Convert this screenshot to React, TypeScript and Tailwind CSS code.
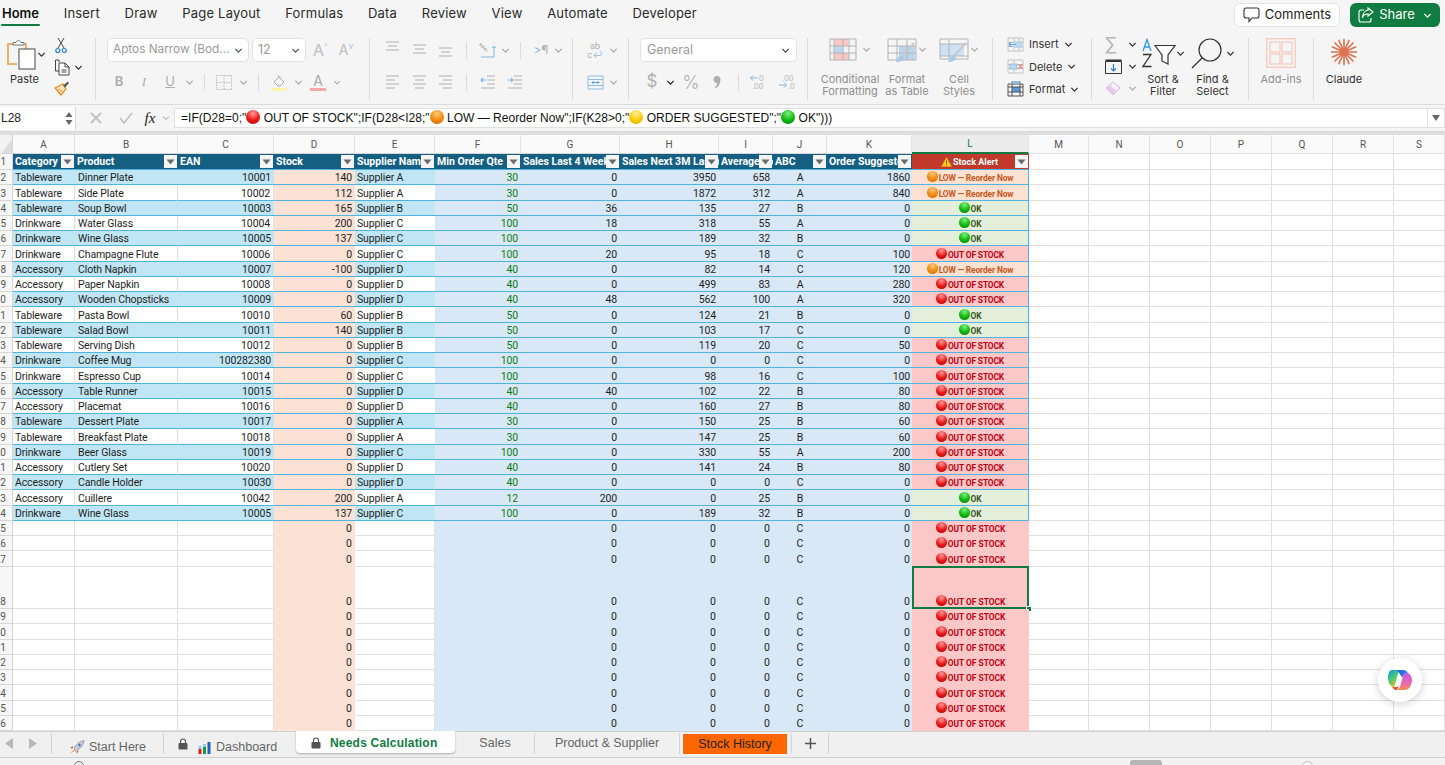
import React from "react";

const W = ["w-[62px]","w-[103px]","w-[96px]","w-[81px]","w-[80px]","w-[86px]","w-[99px]","w-[99px]","w-[54px]","w-[54px]","w-[85px]","w-[117px]"];
const EXTRA = ["w-[60px]","w-[61px]","w-[61px]","w-[61px]","w-[61px]","w-[61px]","w-[51px]"];
const LETTERS = "ABCDEFGHIJKL".split("");
const EXTRAL = ["M","N","O","P","Q","R","S"];
const HEAD = ["Category","Product","EAN","Stock","Supplier Name","Min Order Qte","Sales Last 4 Weeks","Sales Next 3M Last Year","Average Monthly","ABC","Order Suggested"];

type A = "L" | "K" | "O";
type R = [string,string,string,string,string,string,string,string,string,string,string,A];
const DATA: R[] = [
["Tableware","Dinner Plate","10001","140","Supplier A","30","0","3950","658","A","1860","L"],
["Tableware","Side Plate","10002","112","Supplier A","30","0","1872","312","A","840","L"],
["Tableware","Soup Bowl","10003","165","Supplier B","50","36","135","27","B","0","K"],
["Drinkware","Water Glass","10004","200","Supplier C","100","18","318","55","A","0","K"],
["Drinkware","Wine Glass","10005","137","Supplier C","100","0","189","32","B","0","K"],
["Drinkware","Champagne Flute","10006","0","Supplier C","100","20","95","18","C","100","O"],
["Accessory","Cloth Napkin","10007","-100","Supplier D","40","0","82","14","C","120","L"],
["Accessory","Paper Napkin","10008","0","Supplier D","40","0","499","83","A","280","O"],
["Accessory","Wooden Chopsticks","10009","0","Supplier D","40","48","562","100","A","320","O"],
["Tableware","Pasta Bowl","10010","60","Supplier B","50","0","124","21","B","0","K"],
["Tableware","Salad Bowl","10011","140","Supplier B","50","0","103","17","C","0","K"],
["Tableware","Serving Dish","10012","0","Supplier B","50","0","119","20","C","50","O"],
["Drinkware","Coffee Mug","100282380","0","Supplier C","100","0","0","0","C","0","O"],
["Drinkware","Espresso Cup","10014","0","Supplier C","100","0","98","16","C","100","O"],
["Accessory","Table Runner","10015","0","Supplier D","40","40","102","22","B","80","O"],
["Accessory","Placemat","10016","0","Supplier D","40","0","160","27","B","80","O"],
["Tableware","Dessert Plate","10017","0","Supplier A","30","0","150","25","B","60","O"],
["Tableware","Breakfast Plate","10018","0","Supplier A","30","0","147","25","B","60","O"],
["Drinkware","Beer Glass","10019","0","Supplier C","100","0","330","55","A","200","O"],
["Accessory","Cutlery Set","10020","0","Supplier D","40","0","141","24","B","80","O"],
["Accessory","Candle Holder","10030","0","Supplier D","40","0","0","0","C","0","O"],
["Accessory","Cuillere","10042","200","Supplier A","12","200","0","25","B","0","K"],
["Drinkware","Wine Glass","10005","137","Supplier C","100","0","189","32","B","0","K"],
];

const BALL = {
  red: "bg-[radial-gradient(circle_at_50%_25%,#ff9a9a,#e81515_55%,#a80808)]",
  orange: "bg-[radial-gradient(circle_at_50%_25%,#ffc77a,#f08a10_55%,#c46a05)]",
  yellow: "bg-[radial-gradient(circle_at_50%_25%,#fff0a0,#ffcc00_55%,#e0a800)]",
  green: "bg-[radial-gradient(circle_at_50%_25%,#7cf07c,#0fb80f_55%,#067a06)]",
};
function Ball({ c, big }: { c: keyof typeof BALL; big?: boolean }) {
  return <span className={`inline-block rounded-full shrink-0 ${big ? "w-[14px] h-[14px] -translate-y-[1px]" : "w-[11px] h-[11px] -translate-y-[2px]"} ${BALL[c]}`} />;
}

function Chev({ c = "#555", s = 9 }: { c?: string; s?: number }) {
  return <svg width={s} height={s} viewBox="0 0 10 10" fill="none"><path d="M1.5 3.2 5 6.8l3.5-3.6" stroke={c} strokeWidth="1.4" /></svg>;
}
function Sep({ h = "h-[17px]" }: { h?: string }) {
  return <span className={`block w-px bg-[#dcdcdc] ${h}`} />;
}

function Alert({ a }: { a: A }) {
  const base = "flex items-end justify-center gap-[1px] h-full font-bold text-[8.4px] leading-[11px] whitespace-nowrap";
  if (a === "L") return <div className={`${base} text-[#c8581a]`}><Ball c="orange" /><span>LOW — Reorder Now</span></div>;
  if (a === "K") return <div className={`${base} text-[#375623]`}><Ball c="green" /><span>OK</span></div>;
  return <div className={`${base} text-[#c00010]`}><Ball c="red" /><span>OUT OF STOCK</span></div>;
}

function FilterBtn() {
  return (
    <span className="absolute right-[1px] top-[1px] w-[13px] h-[13px] bg-[#f4f4f4] flex items-center justify-center">
      <svg width="9" height="6" viewBox="0 0 9 6"><path d="M0.5 0.5h8L4.5 5.5z" fill="#6b6b6b" /></svg>
    </span>
  );
}

const RH = "w-[13px] shrink-0 bg-[#f7f7f7] border-r border-b border-[#d6d6d6] text-[#555] text-[10px] leading-[12px] tracking-normal flex justify-end pr-[6px] overflow-hidden";

function Extras({ h = "h-full" }: { h?: string }) {
  return <>{EXTRA.map((w, i) => <div key={i} className={`${w} ${h} shrink-0 border-r border-b border-[#e0e0e0] bg-white`} />)}</>;
}

function DataRow({ r, n }: { r: R; n: number }) {
  const band = n % 2 === 0;
  const bg = band ? "bg-[#c0e6f5]" : "bg-white";
  const vline = band ? "" : "border-r border-r-[#e0e0e0]";
  const altBg = r[11] === "L" ? "bg-[#fde1d3]" : r[11] === "K" ? "bg-[#e3efda]" : "bg-[#ffc8c8]";
  const base = "shrink-0 h-full border-b border-b-[#4fb4e2] flex items-end overflow-hidden whitespace-nowrap";
  return (
    <div className="flex h-[15.25px] text-[10.5px] leading-[12px] tracking-[-0.12px] text-[#1f1f1f]">
      <div className={`${RH} items-end`}>{n}</div>
      <div className={`${W[0]} ${base} ${bg} ${vline} pl-[2px]`}>{r[0]}</div>
      <div className={`${W[1]} ${base} ${bg} ${vline} pl-[3px]`}>{r[1]}</div>
      <div className={`${W[2]} ${base} ${bg} ${vline} justify-end pr-[3px]`}>{r[2]}</div>
      <div className={`${W[3]} ${base} bg-[#fce1d5] justify-end pr-[3px]`}>{r[3]}</div>
      <div className={`${W[4]} ${base} ${bg} pl-[2px]`}>{r[4]}</div>
      <div className={`${W[5]} ${base} bg-[#d9e8f7] justify-end pr-[3px] text-[#107c10]`}>{r[5]}</div>
      <div className={`${W[6]} ${base} bg-[#d9e8f7] justify-end pr-[3px]`}>{r[6]}</div>
      <div className={`${W[7]} ${base} bg-[#d9e8f7] justify-end pr-[3px]`}>{r[7]}</div>
      <div className={`${W[8]} ${base} bg-[#d9e8f7] justify-end pr-[3px]`}>{r[8]}</div>
      <div className={`${W[9]} ${base} bg-[#d9e8f7] justify-center`}>{r[9]}</div>
      <div className={`${W[10]} ${base} bg-[#d9e8f7] justify-end pr-[2px]`}>{r[10]}</div>
      <div className={`${W[11]} shrink-0 h-full border-b border-b-[#4fb4e2] border-r border-r-[#4fb4e2] ${altBg}`}><Alert a={r[11]} /></div>
      <Extras />
    </div>
  );
}

function EmptyRow({ n, tall, }: { n: number; tall?: boolean }) {
  const h = tall ? "h-[42.5px]" : "h-[15.25px]";
  const g = "shrink-0 h-full bg-white border-r border-b border-[#e0e0e0]";
  const blue = "shrink-0 h-full bg-[#d9e8f7] flex items-end justify-end pb-[1px] pr-[3px]";
  return (
    <div className={`flex ${h} text-[10.5px] leading-[12px] text-[#1f1f1f]`}>
      <div className={`${RH} items-end`}>{n}</div>
      <div className={`${W[0]} ${g}`} />
      <div className={`${W[1]} ${g}`} />
      <div className={`${W[2]} ${g}`} />
      <div className={`${W[3]} shrink-0 h-full bg-[#fce1d5] flex items-end justify-end pr-[3px] pb-[1px]`}>0</div>
      <div className={`${W[4]} ${g}`} />
      <div className={`${W[5]} shrink-0 h-full bg-[#d9e8f7]`} />
      <div className={`${W[6]} ${blue}`}>0</div>
      <div className={`${W[7]} ${blue}`}>0</div>
      <div className={`${W[8]} ${blue}`}>0</div>
      <div className={`${W[9]} ${blue} !justify-center !pr-0`}>C</div>
      <div className={`${W[10]} ${blue} !pr-[2px]`}>0</div>
      <div className={`${W[11]} shrink-0 h-full bg-[#ffc8c8] relative pb-[1px]`}>
        <Alert a="O" />
        {tall && (
          <>
            <span className="absolute -top-[1px] left-0 right-0 bottom-0 border-2 border-[#107c41]" />
            <span className="absolute -right-[3px] -bottom-[3px] w-[6px] h-[6px] bg-[#107c41] border border-white" />
          </>
        )}
      </div>
      <Extras />
    </div>
  );
}

/* ---------- ribbon icons ---------- */
const PasteIcon = () => (
  <svg width="31" height="32" viewBox="0 0 31 32" fill="none">
    <path d="M2 6h6M18 6h2v5" stroke="#e9b363" strokeWidth="2" />
    <path d="M2 5v21h9" stroke="#e9b363" strokeWidth="2" />
    <path d="M7 7V4.5h3C10.5 2 14.500 2 15 4.500h3V7z" fill="#fff" stroke="#777" strokeWidth="1" />
    <rect x="13" y="11" width="16" height="20" fill="#fff" stroke="#666" strokeWidth="1.2" />
  </svg>
);
const Scissors = () => (
  <svg width="12" height="17" viewBox="0 0 12 17" fill="none">
    <path d="M3 11 9 1M9 11 3 1" stroke="#444" strokeWidth="1" />
    <circle cx="2.800" cy="13.500" r="2" stroke="#2b7cd3" strokeWidth="1.200" />
    <circle cx="9.200" cy="13.500" r="2" stroke="#2b7cd3" strokeWidth="1.200" />
  </svg>
);
const CopyIcon = () => (
  <svg width="17" height="17" viewBox="0 0 17 17" fill="none" stroke="#444">
    <path d="M5 3V1H1.500v11H5" />
    <path d="M5 4h6l4 4v8H5z" fill="#fff" />
    <path d="M11 4v4h4M7.500 11h5M7.500 13h5" />
  </svg>
);
const BrushIcon = () => (
  <svg width="16" height="15" viewBox="0 0 16 15" fill="none">
    <path d="M1 7 9 3l3 5-5 6z" fill="#fde2bd" stroke="#ec8a2a" strokeWidth="1.200" />
    <path d="M3 10l3-2M5 12l3-3" stroke="#ec8a2a" />
    <path d="M9 4.500 14 0.500l1 1.500-4 4.500z" fill="#555" />
  </svg>
);
const AlignTop = ({ y }: { y: number }) => (
  <svg width="15" height="18" viewBox="0 0 15 18" stroke="#b0b0b0" strokeWidth="1.200"><path d={`M1 ${y}h13M3 ${y + 4}h9M1 ${y + 8}h13`} /></svg>
);
const AlignH = ({ k }: { k: "l" | "c" | "r" }) => {
  const d = k === "l" ? "M1 2h13M1 6h9M1 10h13M1 14h9" : k === "c" ? "M1 2h13M3 6h9M1 10h13M3 14h9" : "M1 2h13M5 6h9M1 10h13M5 14h9";
  return <svg width="15" height="16" viewBox="0 0 15 16" stroke="#b0b0b0" strokeWidth="1.200"><path d={d} /></svg>;
};
const Indent = ({ out }: { out?: boolean }) => (
  <svg width="15" height="14" viewBox="0 0 15 14" fill="none" strokeWidth="1.100">
    <path d="M7 1h8M7 5h8M7 9h8M1 13h14" stroke="#b0b0b0" />
    <path d={out ? "M6 5H1M3 3 1 5l2 2" : "M0.500 5H6M4 3l2 2-2 2"} stroke="#7fb7e8" />
  </svg>
);
const ArrowsDec = ({ right }: { right?: boolean }) => (
  <svg width="17" height="16" viewBox="0 0 17 16" fill="none">
    {right ? (
      <>
        <text x="4" y="6.500" fontSize="7.500" fill="#b5b5b5" fontFamily="Inter">.00</text>
        <path d="M1 11h7M6 8.500 8.500 11 6 13.500" stroke="#7fb7e8" />
        <text x="10" y="14.500" fontSize="7.500" fill="#b5b5b5" fontFamily="Inter">.0</text>
      </>
    ) : (
      <>
        <path d="M1.500 4h7M4 1.500 1.500 4 4 6.500" stroke="#7fb7e8" />
        <text x="10" y="7" fontSize="7.500" fill="#b5b5b5" fontFamily="Inter">0</text>
        <text x="3" y="15" fontSize="7.500" fill="#b5b5b5" fontFamily="Inter">.00</text>
      </>
    )}
  </svg>
);
const CondIcon = () => (
  <svg width="28" height="23" viewBox="0 0 28 23" fill="none">
    <path d="M5 1h14v7H5z" fill="#f9c6c6" />
    <path d="M9 8h9v7H9z" fill="#f3f3f3" /><path d="M5 8h9v7H5z" fill="#bcd9f2" />
    <path d="M5 15h15v7H5z" fill="#f9c6c6" />
    <path d="M1 1h26v21H1zM1 8h26M1 15h26M5 1v21M14 1v21M20 1v21" stroke="#b4b4b4" />
  </svg>
);
const TableIcon = ({ cell }: { cell?: boolean }) => (
  <svg width="30" height="26" viewBox="0 0 30 26" fill="none">
    {cell ? <path d="M1 6h24v12H1z" fill="#cfe1f5" /> : <path d="M12 8h16v14H12z" fill="#bcd5ef" />}
    <path d={cell ? "M1 1h28v20H1zM1 6h28M1 18h28M10 1v20" : "M1 1h28v21H1zM1 8h28M1 15h28M10 1v21M20 1v21"} stroke="#b4b4b4" />
    <path d="M27 5 15 18" stroke="#c9c9c9" strokeWidth="2" />
    <path d="M15 17c-3 0-4 3-6 7 4 0 8-1 8-5z" fill="#a9cbec" />
  </svg>
);
const InsertIcon = () => (
  <svg width="17" height="15" viewBox="0 0 17 15" fill="none">
    <path d="M1 1h15v13H1zM1 5.500h15M1 9.500h15M7 1v13M12 1v13" stroke="#c4c4c4" />
    <path d="M7 4h8v7H7z" fill="#bcd9f2" />
    <path d="M9 7.500H2M4.500 5 2 7.500 4.500 10" stroke="#6ba8e0" strokeWidth="1.200" />
  </svg>
);
const DeleteIcon = () => (
  <svg width="17" height="15" viewBox="0 0 17 15" fill="none">
    <path d="M1 1h15v13H1zM1 5.500h15M1 9.500h15M7 1v13" stroke="#c4c4c4" />
    <path d="M3 5h7v5H3z" fill="#bcd9f2" stroke="#8fbce6" />
    <path d="m11.500 5 4 5M15.500 5l-4 5" stroke="#e97b7b" strokeWidth="1.200" />
  </svg>
);
const FormatIcon = () => (
  <svg width="17" height="16" viewBox="0 0 17 16" fill="none">
    <path d="M5 6h8v5H5z" fill="#5b9bdc" />
    <path d="M1 3h15v12H1zM1 6h15M1 11h15M5 3v12M13 3v12" stroke="#444" strokeWidth=".9" />
    <path d="M5 1h8M5 .2v2M13 .2v2" stroke="#2b7cd3" strokeWidth=".9" />
  </svg>
);
const SortIcon = () => (
  <svg width="34" height="30" viewBox="0 0 34 30" fill="none">
    <path d="M1 13 5 1.500 9 13M2.500 9h5" stroke="#2e9be0" strokeWidth="1.300" />
    <path d="M1 16.500h8L1 28.500h8.500" stroke="#333" strokeWidth="1.300" />
    <path d="M13 7.500h20L26 17v9l-6-3v-6z" stroke="#333" strokeWidth="1.200" fill="#fff" />
  </svg>
);
const MagnifierIcon = () => (
  <svg width="31" height="31" viewBox="0 0 31 31" fill="none" stroke="#333" strokeWidth="1.200">
    <circle cx="19" cy="12" r="11" />
    <path d="M11 20 1 30" />
  </svg>
);
const AddInsIcon = () => (
  <svg width="30" height="30" viewBox="0 0 30 30" fill="none">
    <rect x=".7" y=".7" width="28.600" height="28.600" stroke="#f6cdbf" strokeWidth="1.400" />
    <rect x="4" y="4" width="10" height="10" stroke="#f3bfae" /><rect x="16" y="4" width="10" height="10" stroke="#f3bfae" />
    <rect x="4" y="16" width="10" height="10" stroke="#f3bfae" /><rect x="16" y="16" width="10" height="10" stroke="#f3bfae" />
  </svg>
);
const ClaudeIcon = () => (
  <svg width="28" height="28" viewBox="0 0 28 28" stroke="#dd7350" strokeWidth="1.700" strokeLinecap="round">
    <path d="M14 1.500v25M1.500 14h25M5 5l18 18M23 5 5 23M9 2.500l10 23M19 2.500 9 25.500M2.500 9l23 10M25.500 9l-23 10" />
  </svg>
);
const Lock = ({ c = "#555" }: { c?: string }) => (
  <svg width="10" height="12" viewBox="0 0 10 12"><path d="M2.500 5V3.500a2.500 2.500 0 0 1 5 0V5" fill="none" stroke={c} strokeWidth="1.200" /><rect x="0.500" y="5" width="9" height="6.500" rx="1" fill={c} /></svg>
);

const grayLabel = "text-[11px] leading-[12px] text-[#8f8f8f] text-center whitespace-nowrap";
const darkLabel = "text-[11px] leading-[12px] text-[#333] text-center whitespace-nowrap";
const inputBox = "h-[24px] bg-white rounded-[5px] border border-[#e2e2e2] flex items-center text-[12.5px] text-[#9a9a9a] whitespace-nowrap";
const slot = "flex items-center justify-center shrink-0";
const TABS = ["Insert","Draw","Page Layout","Formulas","Data","Review","View","Automate","Developer"];

export default function App() {
  return (
    <div className="w-[1445px] h-[765px] overflow-hidden relative bg-[#f5f5f5] flex flex-col font-['Inter','Liberation_Sans',sans-serif]">
      {/* Tabs */}
      <div className="h-[28px] shrink-0 flex items-start justify-between pr-[5px]">
        <div className="flex gap-[24.7px] pl-[2px] text-[13px] text-[#2a2a2a] leading-[27px] tracking-[0.2px]">
          <div className="relative font-semibold text-[#111] tracking-normal">Home<span className="absolute -left-[1px] -right-[1px] top-[24px] h-[2px] bg-[#107c41] rounded" /></div>
          {TABS.map(t => <div key={t}>{t}</div>)}
        </div>
        <div className="flex items-center gap-[10px] pt-[3px]">
          <div className="w-[106px] h-[24px] bg-white rounded-[6px] border border-[#e3e3e3] flex items-center justify-center gap-[5px] text-[13px] text-[#222]">
            <svg width="17" height="16" viewBox="0 0 17 16" fill="none" stroke="#333" strokeWidth="1.100"><path d="M3 1h11a2 2 0 0 1 2 2v6a2 2 0 0 1-2 2H9l-3 3.500V11H3a2 2 0 0 1-2-2V3a2 2 0 0 1 2-2z" /></svg>
            Comments
          </div>
          <div className="w-[90px] h-[24px] bg-[#107c41] rounded-[6px] flex items-center justify-center gap-[5px] text-[13px] text-white">
            <svg width="16" height="16" viewBox="0 0 16 16" fill="none" stroke="#fff" strokeWidth="1.100"><path d="M6 3H3a2 2 0 0 0-2 2v8a2 2 0 0 0 2 2h8a2 2 0 0 0 2-2v-2" /><path d="M10 1l5 4-5 4V7C7 7 5 8 4.500 11 4.500 7 6.500 3.500 10 3.200z" /></svg>
            Share
            <span className="ml-[3px]"><Chev c="#fff" /></span>
          </div>
        </div>
      </div>

      {/* Ribbon */}
      <div className="h-[77px] shrink-0 flex pt-[10px] border-b border-[#dadada]">
        {/* clipboard */}
        <div className="w-[96px] h-[62px] shrink-0 border-r border-[#dcdcdc] flex pl-[6px]">
          <div className="w-[48px] flex flex-col">
            <div className="flex items-center gap-[0px]"><PasteIcon /><Chev c="#333" /></div>
            <div className="text-[11px] text-[#333] mt-[2px] pl-[4px] leading-[14px]">Paste</div>
          </div>
          <div className="flex flex-col items-start gap-[5px] -mt-[1px]">
            <span className="pl-[1px]"><Scissors /></span>
            <span className="flex items-center gap-[3px]"><CopyIcon /><Chev c="#333" /></span>
            <BrushIcon />
          </div>
        </div>
        {/* font */}
        <div className="w-[274px] h-[62px] shrink-0 border-r border-[#dcdcdc] pl-[11px]">
          <div className="flex items-center h-[24px]">
            <div className={`${inputBox} w-[142px] justify-between px-[5px] !text-[11.8px]`}>Aptos Narrow (Bod...<Chev /></div>
            <div className={`${inputBox} w-[54px] ml-[3px] justify-between px-[5px]`}>12<Chev /></div>
            <div className="flex items-start ml-[7px] text-[#bdbdbd] text-[16px] leading-[24px]">A<span className="text-[8px] leading-[16px] text-[#bdbdbd]">^</span></div>
            <div className="flex items-start ml-[11px] text-[#bdbdbd] text-[14px] leading-[24px]">A<span className="text-[8px] leading-[16px] text-[#9cc4e8]">v</span></div>
          </div>
          <div className="flex items-center h-[22px] mt-[9px] text-[#b0b0b0] text-[13px]">
            <div className={`${slot} w-[24px] font-bold`}>B</div>
            <div className={`${slot} w-[26px] italic font-['Liberation_Serif']`}>I</div>
            <div className={`${slot} w-[26px] underline`}>U</div>
            <div className={`${slot} w-[12px]`}><Chev c="#aaa" /></div>
            <div className={`${slot} w-[18px]`}><Sep /></div>
            <div className={`${slot} w-[22px]`}>
              <svg width="16" height="15" viewBox="0 0 16 15" fill="none" stroke="#bdbdbd" strokeDasharray="1.500 1"><path d="M.5.5h15v14H.5zM.5 7.500h15M8 .5v14" /></svg>
            </div>
            <div className={`${slot} w-[16px]`}><Chev c="#aaa" /></div>
            <div className={`${slot} w-[14px]`}><Sep /></div>
            <div className={`${slot} w-[28px]`}>
              <svg width="17" height="17" viewBox="0 0 17 17" fill="none"><path d="M3 8l5-5 5 5-4 4H7z" stroke="#aaa" /><path d="M7 1l2 3" stroke="#aaa" /><rect y="14" width="16" height="3" fill="#fbf3a8" /></svg>
            </div>
            <div className={`${slot} w-[10px]`}><Chev c="#aaa" /></div>
            <div className={`${slot} w-[30px] relative h-[17px]`}>
              <span className="text-[14px] leading-[14px] text-[#aaa] -mt-[3px]">A</span>
              <span className="absolute left-[7px] bottom-0 w-[16px] h-[3px] bg-[#f9a6a6]" />
            </div>
            <div className={`${slot} w-[8px]`}><Chev c="#aaa" /></div>
          </div>
        </div>
        {/* align */}
        <div className="w-[203px] h-[62px] shrink-0 border-r border-[#dcdcdc] pl-[8px]">
          <div className="flex items-center h-[24px]">
            <div className={`${slot} w-[28px]`}><AlignTop y={1} /></div>
            <div className={`${slot} w-[26px]`}><AlignTop y={4} /></div>
            <div className={`${slot} w-[26px]`}><AlignTop y={7} /></div>
            <div className={`${slot} w-[16px]`}><Sep /></div>
            <div className={`${slot} w-[26px]`}>
              <svg width="17" height="15" viewBox="0 0 17 15" fill="none"><path d="m1 1 7 7" stroke="#bbb" strokeWidth="3" strokeDasharray="2 1" /><path d="M2 14h13V3M15 3l-2 2M15 3l2 2" stroke="#7fb7e8" /></svg>
            </div>
            <div className={`${slot} w-[10px]`}><Chev c="#aaa" /></div>
            <div className={`${slot} w-[20px]`}><Sep /></div>
            <div className={`${slot} w-[22px] text-[12px] text-[#b0b0b0]`}><span className="text-[#8fbce6]">&gt;</span>¶</div>
            <div className={`${slot} w-[12px]`}><Chev c="#aaa" /></div>
          </div>
          <div className="flex items-center h-[22px] mt-[9px]">
            <div className={`${slot} w-[28px]`}><AlignH k="l" /></div>
            <div className={`${slot} w-[26px]`}><AlignH k="c" /></div>
            <div className={`${slot} w-[26px]`}><AlignH k="r" /></div>
            <div className={`${slot} w-[16px]`}><Sep /></div>
            <div className={`${slot} w-[26px]`}><Indent out /></div>
            <div className={`${slot} w-[28px]`}><Indent /></div>
          </div>
        </div>
        {/* wrap */}
        <div className="w-[56px] h-[62px] shrink-0 border-r border-[#dcdcdc] pl-[12px]">
          <div className="flex items-center h-[24px]">
            <div className={`${slot} w-[20px] text-[9px] leading-[9px] text-[#b0b0b0] text-center flex-col`}><span>ab</span><span>c<span className="text-[#8fbce6]">↩</span></span></div>
            <div className={`${slot} w-[16px]`}><Chev c="#aaa" /></div>
          </div>
          <div className="flex items-center h-[22px] mt-[9px]">
            <div className={`${slot} w-[20px]`}>
              <svg width="17" height="15" viewBox="0 0 17 15" fill="none" stroke="#8fbce6"><path d="M1 1h15v13H1zM1 4.500h15M1 10.500h15" /><path d="M5 7.500h7M6.500 6 5 7.500 6.500 9M10.500 6 12 7.500 10.500 9" stroke="#5b9bdc" /></svg>
            </div>
            <div className={`${slot} w-[16px]`}><Chev c="#aaa" /></div>
          </div>
        </div>
        {/* number */}
        <div className="w-[179px] h-[62px] shrink-0 border-r border-[#dcdcdc] pl-[11px]">
          <div className={`${inputBox} w-[157px] justify-between px-[6px]`}>General<Chev c="#444" /></div>
          <div className="flex items-center h-[22px] mt-[9px] text-[#b0b0b0]">
            <div className={`${slot} w-[24px] text-[17px]`}>$</div>
            <div className={`${slot} w-[12px]`}><Chev c="#222" /></div>
            <div className={`${slot} w-[30px] text-[18px] font-light`}>%</div>
            <div className={`${slot} w-[22px]`}>
              <svg width="8" height="13" viewBox="0 0 8 13" fill="#b0b0b0"><path d="M0.500 3.500a3.500 3.500 0 1 1 7 0c0 4-2 7-4.500 9l-1-.8c1-1 2-2.500 2.200-4.700A3.500 3.500 0 0 1 .5 3.500z" /></svg>
            </div>
            <div className={`${slot} w-[20px]`}><Sep /></div>
            <div className={`${slot} w-[18px]`}><ArrowsDec /></div>
            <div className={`${slot} w-[40px]`}><ArrowsDec right /></div>
          </div>
        </div>
        {/* styles */}
        <div className="w-[185px] h-[62px] shrink-0 border-r border-[#dcdcdc] flex pl-[13px]">
          <div className="w-[58px] flex flex-col items-center">
            <div className="h-[35px] flex items-start gap-[5px]"><CondIcon /><span className="mt-[7px]"><Chev c="#aaa" /></span></div>
            <div className={grayLabel}>Conditional<br />Formatting</div>
          </div>
          <div className="w-[42px] ml-[7px] flex flex-col items-center">
            <div className="h-[35px] flex items-start gap-[1px]"><TableIcon /><span className="mt-[7px]"><Chev c="#aaa" /></span></div>
            <div className={grayLabel}>Format<br />as Table</div>
          </div>
          <div className="w-[42px] ml-[10px] flex flex-col items-center">
            <div className="h-[35px] flex items-start gap-[1px]"><TableIcon cell /><span className="mt-[7px]"><Chev c="#aaa" /></span></div>
            <div className={grayLabel}>Cell<br />Styles</div>
          </div>
        </div>
        {/* cells */}
        <div className="w-[99px] h-[62px] shrink-0 border-r border-[#dcdcdc] pl-[14px] text-[11px] text-[#333]">
          <div className="-mt-[5px] flex flex-col">
            <div className="h-[22.500px] flex items-center"><span className="w-[22px]"><InsertIcon /></span>Insert<span className="ml-[5px]"><Chev c="#333" /></span></div>
            <div className="h-[22.500px] flex items-center"><span className="w-[22px]"><DeleteIcon /></span>Delete<span className="ml-[5px]"><Chev c="#333" /></span></div>
            <div className="h-[22.500px] flex items-center"><span className="w-[22px]"><FormatIcon /></span>Format<span className="ml-[5px]"><Chev c="#333" /></span></div>
          </div>
        </div>
        {/* editing */}
        <div className="w-[157px] h-[62px] shrink-0 border-r border-[#dcdcdc] flex pl-[13px]">
          <div className="w-[32px] flex flex-col gap-[7px] -mt-[1px]">
            <div className="flex items-center justify-between h-[15px]"><span className="text-[19px] leading-[15px] text-[#b5b5b5]">∑</span><Chev c="#333" /></div>
            <div className="flex items-center justify-between h-[15px]">
              <svg width="17" height="15" viewBox="0 0 17 15" fill="none"><path d="M.5 2.500h16v12H.5z" stroke="#333" /><path d="M.5.500h16v2H.5z" fill="#333" /><path d="M8.500 5v7M6 9.500l2.500 2.500L11 9.500" stroke="#2b7cd3" strokeWidth="1.200" /></svg>
              <Chev c="#333" />
            </div>
            <div className="flex items-center justify-between h-[15px]">
              <svg width="16" height="15" viewBox="0 0 16 15" fill="none"><path d="M8 1l7 6-7 7-7-7z" stroke="#d9b3e3" /><path d="M4.500 3.500 11 10l-3 4-7-7z" fill="#e9c8ef" /></svg>
              <Chev c="#aaa" />
            </div>
          </div>
          <div className="w-[52px] flex flex-col items-center">
            <div className="h-[35px] flex items-start gap-[0px]"><SortIcon /><span className="mt-[11px]"><Chev c="#333" /></span></div>
            <div className={darkLabel}>Sort &amp;<br />Filter</div>
          </div>
          <div className="w-[45px] ml-[1px] flex flex-col items-center">
            <div className="h-[35px] flex items-start gap-[4px]"><MagnifierIcon /><span className="mt-[11px]"><Chev c="#333" /></span></div>
            <div className={darkLabel}>Find &amp;<br />Select</div>
          </div>
        </div>
        {/* add-ins */}
        <div className="w-[65px] h-[62px] shrink-0 border-r border-[#dcdcdc] flex flex-col items-center">
          <div className="h-[35px]"><AddInsIcon /></div>
          <div className={grayLabel}>Add-ins</div>
        </div>
        <div className="w-[60px] h-[62px] shrink-0 flex flex-col items-center">
          <div className="h-[35px]"><ClaudeIcon /></div>
          <div className={darkLabel}>Claude</div>
        </div>
      </div>

      {/* Formula bar */}
      <div className="h-[27px] shrink-0 flex items-center bg-[#f5f5f5] border-b border-[#d8d8d8]">
        <div className="w-[76px] h-[23px] bg-white border-r border-[#d8d8d8] flex items-center justify-between pl-[1px] pr-[2px] text-[12px] text-[#222] font-['Liberation_Sans']">
          L28
          <svg width="8" height="15" viewBox="0 0 8 15" fill="#666"><path d="M4 1l3.500 5h-7zM4 14 .5 9h7z" /></svg>
        </div>
        <div className={`${slot} w-[40px]`}><svg width="12" height="12" viewBox="0 0 12 12" stroke="#c2c2c2" strokeWidth="1.800"><path d="M1 1l10 10M11 1 1 11" /></svg></div>
        <div className={`${slot} w-[20px]`}><svg width="14" height="12" viewBox="0 0 14 12" fill="none" stroke="#c2c2c2" strokeWidth="1.800"><path d="M1 6l4 5 8-10" /></svg></div>
        <div className={`${slot} w-[24px] ml-[2px] font-['Liberation_Serif'] italic text-[15px] text-[#222]`}>fx</div>
        <div className={`${slot} w-[8px]`}><Chev c="#bbb" s={8} /></div>
        <div className="ml-[4px] flex-1 h-[20px] bg-white border border-[#e0e0e0] flex items-center pl-[6px] text-[12px] tracking-[0.03px] text-[#111] font-['Liberation_Sans'] whitespace-pre">
          =IF(D28=0;"<Ball c="red" big /> OUT OF STOCK";IF(D28&lt;I28;"<Ball c="orange" big /> LOW — Reorder Now";IF(K28&gt;0;"<Ball c="yellow" big /> ORDER SUGGESTED";"<Ball c="green" big /> OK")))
        </div>
        <div className={`${slot} w-[17px] h-[20px] bg-white border-r border-y border-[#e0e0e0]`}><svg width="8" height="6" viewBox="0 0 8 6" fill="#666"><path d="M0 0h8L4 6z" /></svg></div>
      </div>
      <div className="h-[3px] shrink-0 bg-[#dedede]" />

      {/* Grid */}
      <div className="flex-1 bg-white font-['Roboto','Liberation_Sans',sans-serif] overflow-hidden relative">
        {/* col headers */}
        <div className="flex h-[19px] text-[10px] text-[#555]">
          <div className="w-[13px] shrink-0 bg-[#f2f2f2] border-r border-b border-[#d6d6d6] flex items-end justify-end"><svg width="10" height="14" viewBox="0 0 10 14"><path d="M10 0v14H0z" fill="#dcdcdc" /></svg></div>
          {LETTERS.map((l, i) => (
            <div key={l} className={`${W[i]} shrink-0 flex items-center justify-center border-r border-[#e2e2e2] ${l === "L" ? "bg-[#ececec] text-[#107c41] border-b-2 border-b-[#107c41]" : "bg-[#fafafa] border-b border-b-[#d6d6d6]"}`}>{l}</div>
          ))}
          {EXTRAL.map((l, i) => <div key={l} className={`${EXTRA[i]} shrink-0 flex items-center justify-center bg-[#fafafa] border-r border-b border-[#e2e2e2]`}>{l}</div>)}
        </div>
        {/* header row */}
        <div className="flex h-[16px] text-[10.5px] leading-[12px] font-bold text-white">
          <div className={`${RH} items-center !font-normal`}>1</div>
          {HEAD.map((h, i) => (
            <div key={h} className={`${W[i]} shrink-0 relative bg-[#156082] border-b border-b-[#4fb4e2] overflow-hidden whitespace-nowrap pl-[2px] pt-[1px] flex items-center`}>
              {h}<FilterBtn />
            </div>
          ))}
          <div className={`${W[11]} shrink-0 relative bg-[#c0392b] border-b border-b-[#4fb4e2] flex items-center justify-center pr-[2px] pt-[1px] text-[9px] gap-[1px]`}>
            <svg width="11" height="10" viewBox="0 0 11 10"><path d="M5.500.5l5 9h-10z" fill="#ffc91f" stroke="#e8a800" strokeWidth=".5" /><path d="M5.500 3.500v3M5.500 7.300v1" stroke="#333" strokeWidth=".8" /></svg>
            Stock Alert<FilterBtn />
          </div>
          <Extras />
        </div>
        {DATA.map((r, i) => <DataRow key={i} r={r} n={i + 2} />)}
        {[25, 26, 27].map(n => <EmptyRow key={n} n={n} />)}
        <EmptyRow n={28} tall />
        {[29, 30, 31, 32, 33, 34, 35, 36].map(n => <EmptyRow key={n} n={n} />)}
      </div>

      {/* Sheet tabs */}
      <div className="h-[26px] shrink-0 flex items-start bg-[#f0f0f0] border-t border-[#d0d0d0] text-[12.5px] text-[#666] font-['Liberation_Sans']">
        <div className="w-[52px] h-[21px] mt-[1px] border-r border-[#d4d4d4] flex items-center gap-[16px] pl-[5px]">
          <svg width="8" height="11" viewBox="0 0 8 11" fill="#b8b8b8"><path d="M8 0v11L0 5.500z" /></svg>
          <svg width="8" height="11" viewBox="0 0 8 11" fill="#b8b8b8"><path d="M0 0v11l8-5.500z" /></svg>
        </div>
        <div className="w-[112px] h-[21px] mt-[1px] border-r border-[#d4d4d4] flex items-center pl-[17px] gap-[4px] pt-[7px]">
          <svg width="16" height="14" viewBox="0 0 16 14" fill="none"><path d="M5 9C6 5 10 1.500 15 .5 15 5 11 9 7 11z" fill="#c8cdd8" stroke="#5a6a90" strokeWidth=".5" /><circle cx="10.500" cy="5" r="1.200" fill="#2b6cc4" /><path d="M4 6 1.500 8l2 .5zM8 11l-.5 2.500 2-2z" fill="#d22" /><path d="M4.500 10 1 13.500 5.500 11z" fill="#f5a623" /></svg>
          Start Here
        </div>
        <div className="w-[132px] h-[21px] mt-[1px] flex items-center pl-[14px] pt-[7px]">
          <span className="mr-[10px] -mt-[7px]"><Lock /></span>
          <svg width="13" height="13" viewBox="0 0 13 13"><path d="M.5 8h3v5h-3z" fill="#d22" /><path d="M5 6h3v7H5z" fill="#1a9a3a" /><path d="M9.500 1h3v12h-3z" fill="#1f5fbf" /><path d="M.5 5h3v3h-3zM5 3h3v3H5z" fill="#9fc3e8" /></svg>
          <span className="ml-[5px]">Dashboard</span>
        </div>
        <div className="w-[159px] h-[22px] bg-white rounded-b-[4px] shadow-[0_1px_2px_rgba(0,0,0,0.3)] flex items-center pl-[15px] text-[12px] tracking-[0.2px] pt-[2px] text-[#107c41] font-bold -mt-px">
          <Lock /><span className="ml-[9px]">Needs Calculation</span>
        </div>
        <div className="w-[80px] h-[21px] mt-[1px] border-r border-[#d4d4d4] flex items-center justify-center pl-[1px]">Sales</div>
        <div className="w-[145px] h-[21px] mt-[1px] border-r border-[#d4d4d4] flex items-center justify-center">Product &amp; Supplier</div>
        <div className="w-[104px] h-[20px] ml-[3px] mt-[2px] bg-[#ff6600] flex items-center justify-center text-[#222]">Stock History</div>
        <div className="w-[38px] h-[21px] ml-[4px] mt-[1px] border-x border-[#d4d4d4] flex items-center justify-center">
          <svg width="11" height="11" viewBox="0 0 11 11" stroke="#555" strokeWidth="1.500"><path d="M5.500 0v11M0 5.500h11" /></svg>
        </div>
      </div>
      {/* status */}
      <div className="h-[8px] shrink-0 bg-[#f2f2f2] border-t border-[#cfcfcf] relative overflow-hidden">
        <span className="absolute left-[74px] top-[3px] w-[10px] h-[10px] rounded-full border border-[#777]" />
        <span className="absolute left-[1130px] top-[2px] w-[32px] h-[10px] rounded-[3px] bg-[#b5b5b5]" />
        <span className="absolute left-[1302px] top-[3px] w-[11px] h-[11px] rounded-full bg-white border border-[#bbb]" />
      </div>

      {/* Copilot floating button */}
      <div className="absolute left-[1378px] top-[658px] w-[44px] h-[44px] rounded-full bg-white shadow-[0_2px_10px_rgba(0,0,0,0.18)] flex items-center justify-center">
        <svg width="24" height="22" viewBox="0 0 24 22">
          <defs>
            <linearGradient id="cpa" x1="0" y1="0" x2="0.6" y2="1"><stop offset="0" stopColor="#1f8fe0" /><stop offset=".5" stopColor="#3fc97a" /><stop offset="1" stopColor="#f5c518" /></linearGradient>
            <linearGradient id="cpb" x1="0.5" y1="0" x2="0.5" y2="1"><stop offset="0" stopColor="#c05ae0" /><stop offset=".6" stopColor="#e86ab0" /><stop offset="1" stopColor="#f7904f" /></linearGradient>
            <linearGradient id="cpc" x1="0" y1="0" x2="1" y2="0"><stop offset="0" stopColor="#1565d8" /><stop offset="1" stopColor="#3a7ee8" /></linearGradient>
          </defs>
          <path d="M4 1h9c-2 1-3 3-4 7l-2 8c-.5 1.500-1 2-2 2-3-1-5-5-5-9 0-4 1-8 4-8z" fill="url(#cpa)" />
          <path d="M20 4c3 2 4 4 4 7 0 5-3 10-7 10H9c2-1 3-3 4-7l2-7c.5-2 2.500-4 5-3z" fill="url(#cpb)" />
          <path d="M9 1h6c2 0 4 1 5 3-2-.8-4.500 1-5 3l-.5 1.500C12 6 11 3 9 1z" fill="url(#cpc)" />
          <path d="M4 18h4c1 0 2-.5 3-1.500L9 21H7z" fill="#e8502a" />
        </svg>
      </div>
    </div>
  );
}
